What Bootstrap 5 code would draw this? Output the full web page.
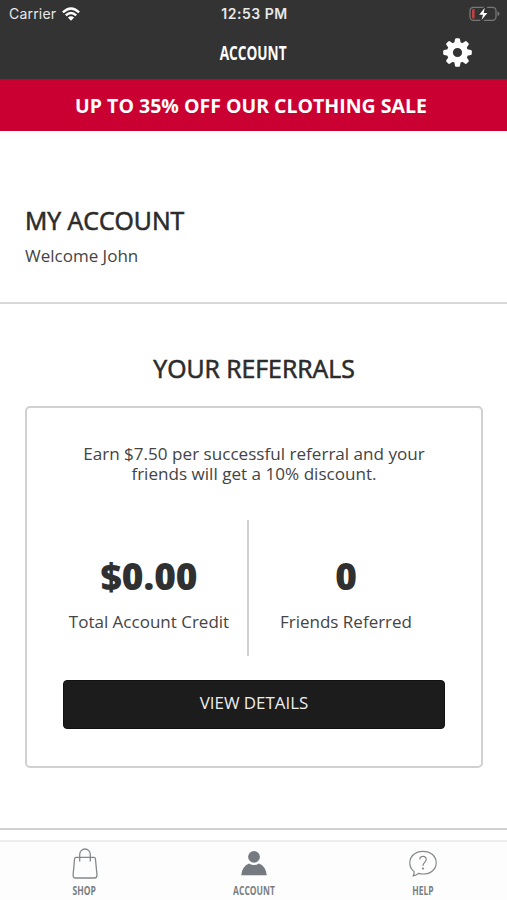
<!DOCTYPE html>
<html lang="en">
<head>
<meta charset="utf-8">
<meta name="viewport" content="width=device-width, initial-scale=1">
<title>Account</title>
<link href="https://cdn.jsdelivr.net/npm/bootstrap@5.3.0/dist/css/bootstrap.min.css" rel="stylesheet">
<style>
body{font-family:"Open Sans","Noto Sans",sans-serif;color:#444;font-size:17px;height:900px;overflow:hidden}
.app-head{background:#333;height:79px;color:#fff}
.status{font-family:Inter,"Liberation Sans",sans-serif;height:27px;font-size:14px;padding:0 7px 0 9px;color:#e9e9e9}
.status>*{flex:1 1 0}
.carrier{letter-spacing:.2px}
.wifi{margin-left:6px}
.clock{font-weight:600;letter-spacing:.5px}
.title-row{height:52px}
.narrow{display:inline-block;font-weight:700;transform:scaleX(.72);white-space:nowrap}
.title-text{font-size:19.2px;transform:scaleX(.71)}
.gear{padding-right:35px;margin-top:-2px}
.promo{background:#cb0032;height:52px;font-size:19.5px;font-weight:700;color:#fff;padding:2px 5px 0 0}
.welcome{height:173px;padding:71px 25px 0;border-bottom:2px solid #d8d8d8}
.heading{font-size:24.8px;line-height:36px;font-weight:400;-webkit-text-stroke:.6px #2b2b2b;color:#2b2b2b;margin:0}
.welcome p{line-height:24px;margin:6px 0 0;font-size:17px}
.referrals{height:526px;padding:46px 24px 0 25px;border-bottom:2px solid #d0d0d0}
.ref-card{margin-top:20px;height:362px;border:2px solid #d0d0d0;border-radius:5px;padding:36px 36px 0}
.pitch{line-height:20px;font-size:17.1px}
.stats{margin-top:36px;height:136px}
.stat-a{width:186px;padding-right:12px;border-right:2px solid #d0d0d0;flex:none}
.stat-b{width:194px;flex:none}
.figure-num{font-size:37px;line-height:48px;font-weight:800;color:#303030;padding-top:32px}
.stat-label{font-size:17px;line-height:24px;margin-top:10px;white-space:nowrap}
.view-btn{height:49px;margin-top:24px;background:#1c1c1c;color:#eee;border-radius:4px;font-size:16.9px;padding:0 0 4px;border:1px solid #111}
.tabs{height:61px;margin-top:10px;border-top:2px solid #ededed;background:#fdfdfd;color:#7b7f82}
.tabs a{color:inherit;text-decoration:none}
.tabs svg{height:34px;margin-top:5px}
.tab-text{font-size:11.8px;line-height:16px;margin-top:1px}
</style>
</head>
<body class="bg-white">
<header class="app-head">
  <div class="status d-flex align-items-center">
    <div class="d-flex align-items-center"><span class="carrier">Carrier</span>
      <svg class="wifi" width="18" height="14" viewBox="0 0 18 14" fill="none" stroke="#fff" stroke-width="2.4"><path d="M.9 5.3Q9-2.5 17.1 5.3M3.8 8.4Q9 3.4 14.2 8.4"/><path d="M9 13.7 5.9 10.6Q9 8 12.1 10.6Z" fill="#fff" stroke="none"/></svg>
    </div>
    <div class="clock text-center">12:53 PM</div>
    <div class="d-flex justify-content-end">
      <svg width="31" height="16" viewBox="0 0 31 16"><rect x="1" y="1.3" width="26" height="13" rx="3.5" fill="none" stroke="#777" stroke-width="1.3"/><path d="M3 4Q3 3.2 3.800 3.200H5.600V12.400H3.800Q3 12.400 3 11.600Z" fill="#c43e40"/><path d="M28.500 5.500V10Q30.500 9.500 30.500 7.800T28.500 5.500" fill="#777"/><path d="M15.800 0 8 9.200H12.500L11 16H13.700L20.600 6.800H16.400L18.400 0Z" fill="#333"/><path d="M15.800 1.800 10.200 8.800H14L12.500 14 18.400 7H14.700Z" fill="#fff"/></svg>
    </div>
  </div>
  <div class="title-row row g-0 align-items-center">
    <div class="col-4"></div>
    <div class="col-4 text-center"><span class="narrow title-text">ACCOUNT</span></div>
    <div class="col-4 text-end gear"><svg width="29" height="29" viewBox="-14.5 -14.5 29 29"><g fill="#fff"><path fill-rule="evenodd" d="M0-10.6A10.6 10.6 0 1 1 0 10.6A10.6 10.6 0 1 1 0-10.6M0-4.6A4.6 4.6 0 1 0 0 4.6A4.6 4.6 0 1 0 0-4.6"/><path id="tooth" d="M-3.2-9.4-2.4-13.4Q-2.2-14.3-1.3-14.3H1.3Q2.2-14.3 2.4-13.4L3.2-9.4Z"/><use href="#tooth" transform="rotate(45)"/><use href="#tooth" transform="rotate(90)"/><use href="#tooth" transform="rotate(135)"/><use href="#tooth" transform="rotate(180)"/><use href="#tooth" transform="rotate(225)"/><use href="#tooth" transform="rotate(270)"/><use href="#tooth" transform="rotate(315)"/></g></svg></div>
  </div>
</header>
<div class="promo d-flex align-items-center justify-content-center"><span>UP TO 35% OFF OUR CLOTHING SALE</span></div>
<main>
  <section class="welcome">
    <h1 class="heading">MY ACCOUNT</h1>
    <p>Welcome John</p>
  </section>
  <section class="referrals">
    <h2 class="heading text-center">YOUR REFERRALS</h2>
    <div class="ref-card text-center">
      <div class="pitch">Earn $7.50 per successful referral and your<br>friends will get a 10% discount.</div>
      <div class="stats d-flex">
        <div class="stat-a"><div class="figure-num">$0.00</div><div class="stat-label">Total Account Credit</div></div>
        <div class="stat-b"><div class="figure-num">0</div><div class="stat-label">Friends Referred</div></div>
      </div>
      <button type="button" class="btn view-btn w-100">VIEW DETAILS</button>
    </div>
  </section>
</main>
<nav class="tabs row g-0 text-center">
  <a href="#" class="col-4 d-flex flex-column align-items-center"><svg width="28" viewBox="0 0 28 34" fill="none" stroke="#85888a" stroke-width="1.3"><path d="M5 10.3H23Q24.2 10.3 24.4 11.5L26 28Q26 31 23.500 31H4.500Q2 31 2.100 28L3.600 11.500Q3.800 10.300 5 10.300Z"/><path d="M8.700 14.500V7.500A5.300 5.500 0 0 1 19.300 7.500V14.500"/></svg><span class="narrow tab-text">SHOP</span></a>
  <a href="#" class="col-4 d-flex flex-column align-items-center"><svg width="28" viewBox="0 0 28 34" fill="#757a80"><circle cx="14" cy="9.800" r="5.900"/><path d="M1.200 28.200Q2 19.500 9 16.500Q14 19.500 19 16.500Q26 19.500 26.800 28.200Z"/></svg><span class="narrow tab-text">ACCOUNT</span></a>
  <a href="#" class="col-4 d-flex flex-column align-items-center"><svg width="30" viewBox="0 0 30 34" fill="none" stroke="#85888a" stroke-width="1.200"><path d="M6 24.500Q1.800 21.500 1.800 15.800C1.800 9 7.500 4.300 15 4.300S28.200 9 28.200 15.800 22.500 27 15 27Q12.500 27 10.500 26.400Q8.500 28.400 5.200 28.800Q6.600 26.500 6 24.500Z"/><path d="M11.800 12.500C11.800 8.300 18.200 8.300 18.200 12.500C18.200 15 15 15.300 15 18.800"/><circle cx="15" cy="21.600" r=".5"/></svg><span class="narrow tab-text">HELP</span></a>
</nav>
<script src="https://cdn.jsdelivr.net/npm/bootstrap@5.3.0/dist/js/bootstrap.bundle.min.js"></script>
</body>
</html>
